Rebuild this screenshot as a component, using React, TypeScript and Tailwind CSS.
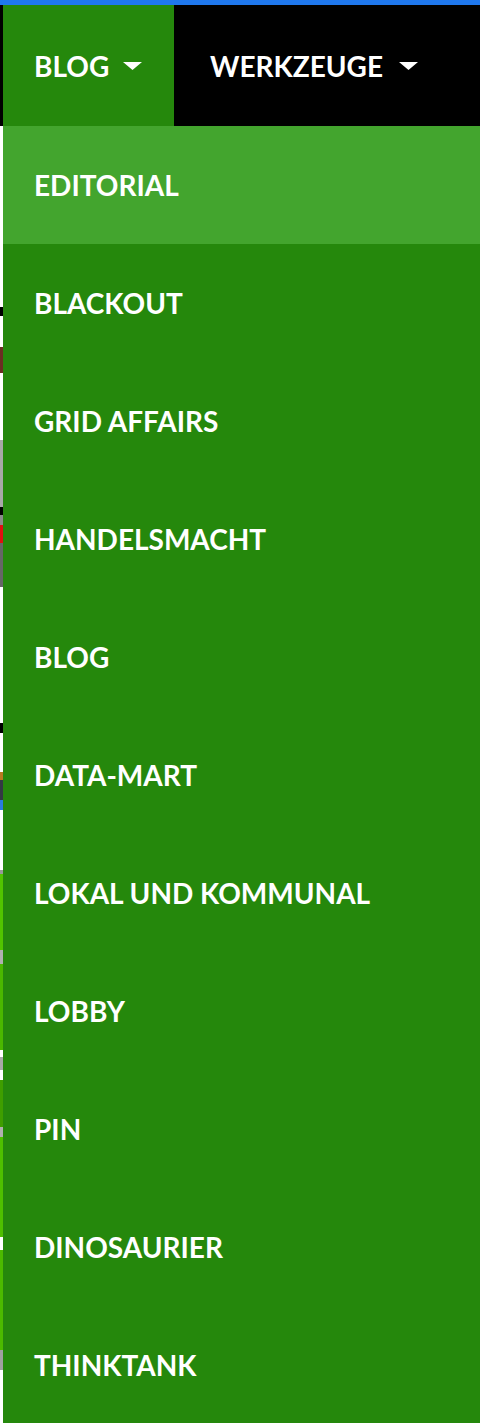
const items = [
  "EDITORIAL",
  "BLACKOUT",
  "GRID AFFAIRS",
  "HANDELSMACHT",
  "BLOG",
  "DATA-MART",
  "LOKAL UND KOMMUNAL",
  "LOBBY",
  "PIN",
  "DINOSAURIER",
  "THINKTANK",
];

// thin slice of the page that shows behind the menu on the left edge
const strip: [number, string][] = [
  [121, "bg-black"],
  [181, "bg-white"],
  [9, "bg-black"],
  [31, "bg-white"],
  [26, "bg-[#6b2e22]"],
  [67, "bg-white"],
  [67, "bg-[#a8a8a8]"],
  [8, "bg-black"],
  [10, "bg-[#8a8a8a]"],
  [18, "bg-[#e01010]"],
  [44, "bg-[#666666]"],
  [136, "bg-white"],
  [10, "bg-black"],
  [39, "bg-white"],
  [8, "bg-[#b87a20]"],
  [20, "bg-[#333a44]"],
  [10, "bg-[#2a7be0]"],
  [60, "bg-white"],
  [4, "bg-[#999999]"],
  [76, "bg-[#52c400]"],
  [14, "bg-[#b0b0b0]"],
  [86, "bg-[#4bb800]"],
  [7, "bg-white"],
  [13, "bg-[#a8a8a8]"],
  [10, "bg-white"],
  [47, "bg-[#3f9e00]"],
  [10, "bg-[#b0b0b0]"],
  [100, "bg-[#4fbf00]"],
  [13, "bg-white"],
  [100, "bg-[#4cba00]"],
  [20, "bg-[#a0a0a0]"],
  [60, "bg-white"],
];

function Caret() {
  return (
    <svg width="19" height="8" viewBox="0 0 19 8" className="shrink-0">
      <path d="M0 0 H19 L9.5 8 Z" fill="#ffffff" />
    </svg>
  );
}

export default function App() {
  return (
    <div
      className="flex h-[1423px] w-[480px] flex-col overflow-hidden bg-white text-white"
      style={{ fontFamily: "Lato, 'Open Sans', sans-serif" }}
    >
      <div className="h-[5px] shrink-0 bg-[#1f78ee]" />
      <div className="flex min-h-0 flex-1">
        <div className="flex w-[3px] shrink-0 flex-col">
          {strip.map(([h, c], i) => (
            <div key={i} className={`${c} shrink-0`} style={{ height: h }} />
          ))}
        </div>
        <div className="flex min-w-0 flex-1 flex-col">
          <nav className="flex h-[121px] shrink-0 bg-black">
            <div className="flex w-[171px] items-center gap-[14px] bg-[#25880c] pl-[31px] text-[28px] font-bold">
              <span>BLOG</span>
              <Caret />
            </div>
            <div className="flex items-center gap-[16px] pl-[36px] text-[28px] font-bold">
              <span>WERKZEUGE</span>
              <Caret />
            </div>
          </nav>
          <ul className="flex flex-col bg-[#25880c]">
            {items.map((item, i) => (
              <li
                key={item}
                className={`flex h-[118px] shrink-0 items-center pl-[31px] text-[28px] font-bold ${
                  i === 0 ? "bg-[#43a52e]" : ""
                }`}
              >
                {item}
              </li>
            ))}
          </ul>
        </div>
      </div>
    </div>
  );
}
